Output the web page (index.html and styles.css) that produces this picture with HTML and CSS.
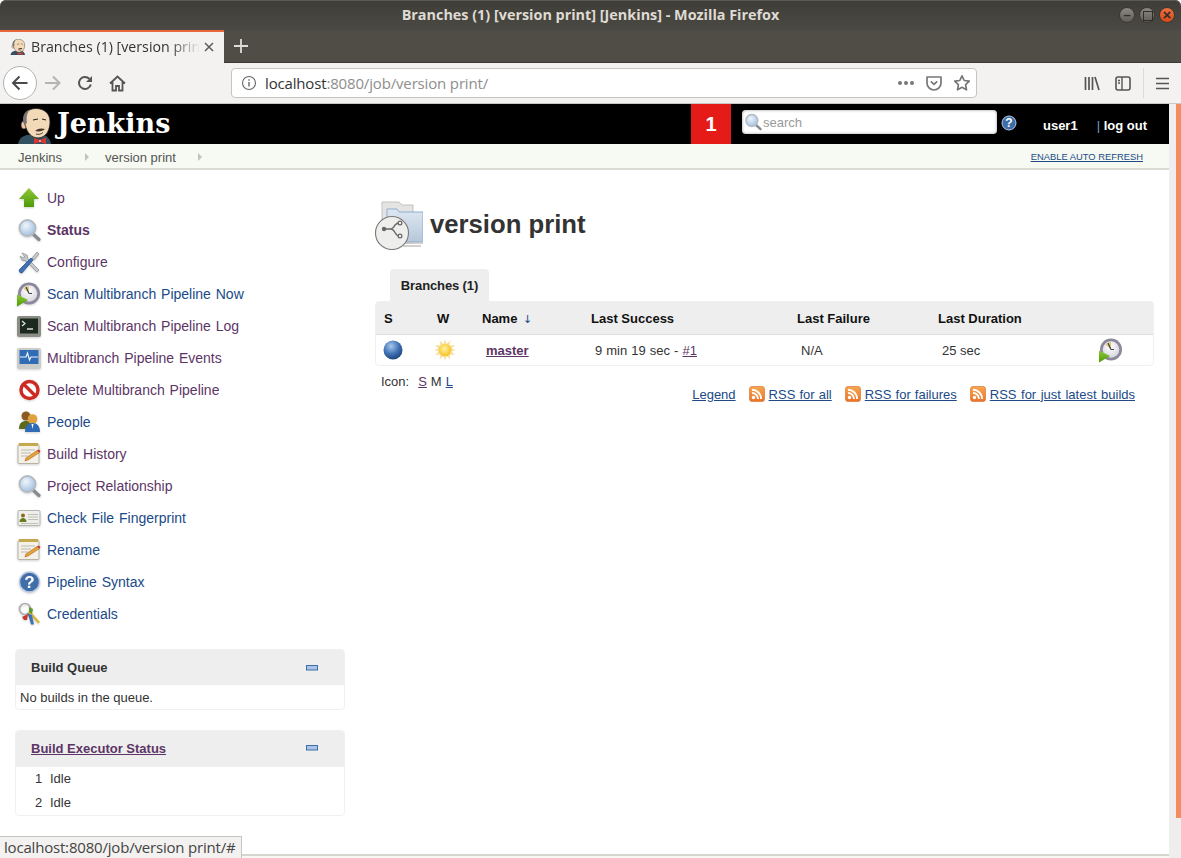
FILE: index.html
```html
<!DOCTYPE html>
<html lang="en">
<head>
<meta charset="utf-8">
<title>Branches (1) [version print] [Jenkins]</title>
<link rel="stylesheet" href="styles.css">
</head>
<body>
<svg class="defs" width="0" height="0" aria-hidden="true">
  <defs>
    <radialGradient id="glass" cx="40%" cy="35%" r="70%"><stop offset="0" stop-color="#eef5fb"/><stop offset="1" stop-color="#9fbfe0"/></radialGradient>
    <radialGradient id="ball" cx="40%" cy="30%" r="75%"><stop offset="0" stop-color="#a9c8ea"/><stop offset=".55" stop-color="#3f72b5"/><stop offset="1" stop-color="#1d3f73"/></radialGradient>
    <radialGradient id="sunc" cx="45%" cy="40%" r="60%"><stop offset="0" stop-color="#fff3a0"/><stop offset="1" stop-color="#f6c123"/></radialGradient>
    <radialGradient id="face" cx="45%" cy="35%" r="70%"><stop offset="0" stop-color="#ffffff"/><stop offset="1" stop-color="#d5d3dc"/></radialGradient>
    <linearGradient id="rss" x1="0" y1="0" x2="0" y2="1"><stop offset="0" stop-color="#f8a650"/><stop offset="1" stop-color="#e8742a"/></linearGradient>
    <linearGradient id="arrow" x1="0" y1="0" x2="0" y2="1"><stop offset="0" stop-color="#8fc93a"/><stop offset="1" stop-color="#4e9a06"/></linearGradient>
    <linearGradient id="folder" x1="0" y1="0" x2="0" y2="1"><stop offset="0" stop-color="#dfe8f2"/><stop offset="1" stop-color="#b6c7da"/></linearGradient>
    <symbol id="i-search" viewBox="0 0 24 24">
      <path d="M15 15l7 6.500" stroke="#858a8f" stroke-width="3.200" stroke-linecap="round"/>
      <circle cx="10.500" cy="10" r="8" fill="url(#glass)" stroke="#b4bac1" stroke-width="1.800"/>
    </symbol>
    <symbol id="i-clock" viewBox="0 0 24 26">
      <circle cx="12" cy="12.500" r="11" fill="#8b889b"/>
      <circle cx="12" cy="12.500" r="8.300" fill="url(#face)"/>
      <path d="M12 12.500V5a7.500 7.500 0 0 0-5.500 2.500z" fill="#e2c77c"/>
      <path d="M12 12.500L9 6M12 12.500h3" stroke="#444" stroke-width="1.200" fill="none"/>
      <path d="M0 13.500l11 5.500L0 25.500z" fill="url(#arrow)"/>
    </symbol>
    <symbol id="i-note" viewBox="0 0 24 24">
      <rect x="1" y="2.500" width="21" height="19" rx="1" fill="#f3f1e8" stroke="#b5b3a6"/>
      <rect x="2" y="1" width="19" height="3" fill="#c4a94f"/>
      <path d="M4 8h14M4 11h10M4 14h7" stroke="#bdbcb4" stroke-width="1.200"/>
      <path d="M8 19l1-3L20 8.500l2.500 2L11 18z" fill="#e8a23c" stroke="#a8651a" stroke-width=".6"/>
      <path d="M20 8.500l2.500 2 1-1.500-2-1.500z" fill="#c8372d"/>
    </symbol>
    <symbol id="i-rss" viewBox="0 0 16 16">
      <rect x=".5" y=".5" width="15" height="15" rx="2.500" fill="url(#rss)" stroke="#d9691f" stroke-width=".6"/>
      <circle cx="4.500" cy="11.500" r="1.700" fill="#fff"/>
      <path d="M3 7a6 6 0 0 1 6 6M3 3.800A9.200 9.200 0 0 1 12.200 13" fill="none" stroke="#fff" stroke-width="1.900"/>
    </symbol>
    <symbol id="i-butler" viewBox="0 0 34 36">
      <path d="M0 36c1-5 4-8 9-9l14-1c5 1 9 4 10 10z" fill="#335061"/>
      <ellipse cx="6" cy="17" rx="3" ry="4" fill="#ecc9a4" stroke="#231f20" stroke-width=".6"/>
      <path d="M6 14C4 6 10 .5 18 .5c8 0 14 5 14 13 0 8-3 14-9 16-7 2-13-3-15-10z" fill="#f2d9b8" stroke="#231f20" stroke-width=".8"/>
      <path d="M6.500 17C3 10 6 3 12 1.500 8 6 8.500 11 9 15z" fill="#77757a"/>
      <path d="M15 12l5-1M24 11l4 1" stroke="#231f20" stroke-width="1"/>
      <path d="M17 23c3-3 7-3 10-2-2 2-6 3-10 2z" fill="#49352a"/>
      <path d="M18 26c3 1 5 0 7-1.500" stroke="#231f20" fill="none" stroke-width=".8"/>
      <path d="M16 30l6 2 6-2.500v6.500l-6-2-6 2z" fill="#d33833"/>
      <path d="M22 32v2" stroke="#fff"/>
    </symbol>
    <symbol id="i-minus" viewBox="0 0 12 6">
      <rect x=".5" y=".5" width="11" height="4.500" fill="#a9c4e4" stroke="#3d6ea8"/>
    </symbol>
  </defs>
</svg>

<div class="titlebar">
  <span class="title-text">Branches (1) [version print] [Jenkins] - Mozilla Firefox</span>
  <div class="winbtns">
    <span class="winbtn">–</span><span class="winbtn winbtn-sq"></span><span class="winbtn winbtn-close">×</span>
  </div>
</div>

<div class="tabbar">
  <div class="ff-tab">
    <svg class="fav" width="16" height="16"><use href="#i-butler"/></svg>
    <span class="ff-tab-title">Branches (1) [version print] [Jenkins]</span>
    <svg class="ff-x" width="12" height="12" viewBox="0 0 12 12"><path d="M2 2l8 8M10 2l-8 8" stroke="#5a5a5a" stroke-width="1.500"/></svg>
  </div>
  <svg class="ff-new" width="16" height="16" viewBox="0 0 16 16"><path d="M8 1v14M1 8h14" stroke="#dedcd8" stroke-width="1.800"/></svg>
</div>

<div class="navbar">
  <span class="backbtn"><svg width="18" height="16" viewBox="0 0 18 16"><path d="M16.500 8H2M8.500 1.500L2 8l6.500 6.500" fill="none" stroke="#4a4a4a" stroke-width="2"/></svg></span>
  <svg class="nav-fwd" width="18" height="16" viewBox="0 0 18 16"><path d="M1 8h14.500M9 1.500L15.500 8 9 14.500" fill="none" stroke="#b4b4b2" stroke-width="2"/></svg>
  <svg class="nav-reload" width="16" height="16" viewBox="0 0 16 16"><path d="M13.800 9.500A6 6 0 1 1 12.300 3.800" fill="none" stroke="#555" stroke-width="2"/><path d="M15 1v6H9z" fill="#555"/></svg>
  <svg class="nav-home" width="17" height="17" viewBox="0 0 17 17"><path d="M1 8.500L8.500 1.500 16 8.500M3.500 7v8.500h3.500v-4.500h3v4.500h3.500V7" fill="none" stroke="#555" stroke-width="1.800"/></svg>
  <div class="urlbar">
    <svg class="url-info" width="16" height="16" viewBox="0 0 16 16"><circle cx="8" cy="8" r="6.500" fill="none" stroke="#666" stroke-width="1.100"/><path d="M8 7v4.500M8 4.300v1.400" stroke="#666" stroke-width="1.400"/></svg>
    <span class="url-text"><span class="url-host">localhost</span>:8080/job/version print/</span>
    <span class="url-dots">
      <i></i><i></i><i></i>
    </span>
    <svg class="url-pocket" width="16" height="16" viewBox="0 0 16 16"><path d="M1 2h14v6a7 7 0 0 1-14 0z" fill="none" stroke="#777" stroke-width="1.700" stroke-linejoin="round"/><path d="M4.800 6.300L8 9.300l3.200-3" fill="none" stroke="#777" stroke-width="1.700"/></svg>
    <svg class="url-star" width="18" height="18" viewBox="0 0 18 18"><path d="M9 1.800l2.200 4.700 5.100.7-3.700 3.500.9 5.100L9 13.300l-4.500 2.500.9-5.100L1.700 7.200l5.100-.7z" fill="none" stroke="#777" stroke-width="1.700" stroke-linejoin="round"/></svg>
  </div>
  <svg class="nav-lib" width="16" height="15" viewBox="0 0 16 15"><path d="M1.500 1v13M5 1v13M8.500 1v13M11 1l4 13" stroke="#555" stroke-width="1.700" fill="none"/></svg>
  <svg class="nav-side" width="16" height="15" viewBox="0 0 16 15"><rect x="1" y="1" width="14" height="13" rx="2" fill="none" stroke="#555" stroke-width="1.600"/><path d="M7 1v13M3 4.500h2M3 7h2" stroke="#555" stroke-width="1.400"/></svg>
  <span class="nav-sep"></span>
  <svg class="nav-menu" width="13" height="13" viewBox="0 0 13 13"><path d="M0 1.500h13M0 6.500h13M0 11.500h13" stroke="#555" stroke-width="1.600"/></svg>
</div>

<div class="viewport">
  <div class="page">
    <header class="jk-header">
      <svg class="jk-butler" width="34" height="36"><use href="#i-butler"/></svg>
      <span class="jk-logo">Jenkins</span>
      <span class="jk-spacer"></span>
      <span class="jk-alert">1</span>
      <div class="jk-search">
        <svg width="18" height="18"><use href="#i-search"/></svg>
        <span class="jk-search-ph">search</span>
      </div>
      <svg class="jk-help" width="16" height="16" viewBox="0 0 16 16"><circle cx="8" cy="8" r="7" fill="#3d6ea8" stroke="#b7cbe4"/><text x="8" y="12" text-anchor="middle" class="jk-help-q">?</text></svg>
      <span class="jk-user">user1</span>
      <span class="jk-logout"><span class="jk-pipe">|</span> log out</span>
    </header>

    <nav class="crumbs">
      <span>Jenkins</span><i class="crumb-arrow"></i>
      <span>version print</span><i class="crumb-arrow crumb-arrow-end"></i>
      <a class="autorefresh" href="#">ENABLE AUTO REFRESH</a>
    </nav>

    <div class="main">
      <aside class="side">
        <ul class="tasks">
          <li><svg width="24" height="24" viewBox="0 0 24 24"><path d="M12 2l10 11h-5v8H7v-8H2z" fill="url(#arrow)"/></svg><a class="v" href="#">Up</a></li>
          <li><svg width="24" height="24"><use href="#i-search"/></svg><a class="v b" href="#">Status</a></li>
          <li><svg width="24" height="24" viewBox="0 0 24 24"><path d="M5 3l5 2 1 4 11 11-2 2L9 11 5 10 3 6l3 2 2-1z" fill="#c6c9cc" stroke="#8a8e92" stroke-width=".7"/><path d="M2 20L14 8l2 2L5 23l-2-.5z" fill="#3f72b5" stroke="#204a87" stroke-width=".7"/><path d="M15 8l5-6 2 2-5 6z" fill="#c6c9cc" stroke="#8a8e92" stroke-width=".7"/></svg><a class="v" href="#">Configure</a></li>
          <li><svg width="24" height="26"><use href="#i-clock"/></svg><a href="#">Scan Multibranch Pipeline Now</a></li>
          <li><svg width="24" height="24" viewBox="0 0 24 24"><rect x="0" y="2" width="24" height="21" rx="2" fill="#8b8d85"/><rect x="3" y="4.500" width="18" height="15" fill="#1b2a1c"/><path d="M5 7l3 2.500L5 12" stroke="#e6eee0" fill="none" stroke-width="1.200"/><path d="M10 15h6" stroke="#e6eee0" stroke-width="1.400"/></svg><a class="v" href="#">Scan Multibranch Pipeline Log</a></li>
          <li><svg width="24" height="24" viewBox="0 0 24 24"><rect x="0" y="2" width="24" height="21" rx="2" fill="#c9ccc8"/><rect x="2.500" y="4" width="19" height="14" fill="#2f6cb5"/><path d="M3 11h6l1.500-4 2 7 1.500-3h7" stroke="#e8f2fb" fill="none" stroke-width="1.200"/></svg><a class="v" href="#">Multibranch Pipeline Events</a></li>
          <li><svg width="24" height="24" viewBox="0 0 24 24"><circle cx="12.500" cy="12" r="8.500" fill="#fff" stroke="#cc2a22" stroke-width="3.400"/><path d="M6.500 6l12 12" stroke="#cc2a22" stroke-width="3.400"/></svg><a class="v" href="#">Delete Multibranch Pipeline</a></li>
          <li><svg width="24" height="24" viewBox="0 0 24 24"><circle cx="9" cy="6" r="4.500" fill="#8a5a1e"/><path d="M2 19c0-6 3-8 7-8s6 2 6 8z" fill="#5d6a1e"/><circle cx="15.500" cy="9" r="4.800" fill="#e0a03c"/><path d="M8 22c0-6 3-9 7.500-9S23 16 23 22z" fill="#2f6cb5"/><path d="M14.500 14h2l-1 5z" fill="#fff"/></svg><a href="#">People</a></li>
          <li><svg width="24" height="24"><use href="#i-note"/></svg><a class="v" href="#">Build History</a></li>
          <li><svg width="24" height="24"><use href="#i-search"/></svg><a class="v" href="#">Project Relationship</a></li>
          <li><svg width="24" height="24" viewBox="0 0 24 24"><rect x="1" y="4.500" width="22" height="15" rx="1" fill="#eeeeea" stroke="#b6b6ae"/><circle cx="6" cy="9.500" r="2" fill="#8a6a1e"/><path d="M2.500 16c0-3 2-4 3.500-4s3.500 1 3.500 4z" fill="#6a7a1e"/><path d="M11 8.500h10M11 11h10M11 13.500h10M4 17.500h17" stroke="#c0c0b8"/></svg><a href="#">Check File Fingerprint</a></li>
          <li><svg width="24" height="24"><use href="#i-note"/></svg><a href="#">Rename</a></li>
          <li><svg width="24" height="24" viewBox="0 0 24 24"><circle cx="12.500" cy="12" r="10" fill="#3f6ea8" stroke="#b9cbe2" stroke-width="1.400"/><text x="12.500" y="18" text-anchor="middle" class="help-q">?</text></svg><a href="#">Pipeline Syntax</a></li>
          <li><svg width="24" height="24" viewBox="0 0 24 24"><circle cx="8" cy="7" r="5.500" fill="none" stroke="#b0b0b0" stroke-width="1.700"/><path d="M13 9l10 11-2 1.500-10-11z" fill="#d9b53a"/><path d="M10 11l5 2 2 9.500h-3l-2-7z" fill="#3f72b5"/><path d="M5 15l6-3-1 6H7z" fill="#c8372d"/><path d="M12 5l4 2-1 5-3-2z" fill="#5c9a2a"/></svg><a href="#">Credentials</a></li>
        </ul>

        <section class="pane pane-q">
          <div class="pane-head"><span class="pane-title">Build Queue</span><svg width="12" height="6"><use href="#i-minus"/></svg></div>
          <div class="pane-body">No builds in the queue.</div>
        </section>

        <section class="pane pane-e">
          <div class="pane-head pane-head-e"><a class="pane-title v" href="#">Build Executor Status</a><svg width="12" height="6"><use href="#i-minus"/></svg></div>
          <div class="exec"><span class="exec-n">1</span><span>Idle</span></div>
          <div class="exec"><span class="exec-n">2</span><span>Idle</span></div>
        </section>
      </aside>

      <main class="content">
        <div class="heading">
          <svg class="heading-ico" width="48" height="50" viewBox="0 0 48 50">
            <path d="M7 2h17l3 3h11v38H7z" fill="#e4e4e2" stroke="#c2c2c0"/>
            <path d="M12 9h10l2 3h24v28a2 2 0 0 1-2 2H20l-8-8z" fill="url(#folder)" stroke="#8fadd0"/>
            <path d="M26 43h22M28 46h18" stroke="#c2c2c0" stroke-width="1.500"/>
            <circle cx="17" cy="33" r="16.500" fill="#eeeeec" stroke="#7a7a78" stroke-width="1.100"/>
            <path d="M9 29h7c4 0 4 7 8 7M15 29c3 0 4-2 5-4 1-1 2-2 4-2" fill="none" stroke="#666" stroke-width="1.400"/>
            <circle cx="9" cy="29" r="2.200" fill="#666"/><circle cx="25" cy="23" r="1.900" fill="none" stroke="#666" stroke-width="1.200"/><circle cx="25" cy="36" r="1.900" fill="none" stroke="#666" stroke-width="1.200"/>
          </svg>
          <h1 class="h-title">version print</h1>
        </div>

        <div class="tabs"><span class="tab">Branches (1)</span></div>

        <table class="grid">
          <colgroup><col class="c1"><col class="c2"><col class="c3"><col class="c4"><col class="c5"><col class="c6"><col class="c7"></colgroup>
          <thead>
            <tr><th class="th-s">S</th><th>W</th><th>Name <span class="sort">↓</span></th><th>Last Success</th><th>Last Failure</th><th>Last Duration</th><th></th></tr>
          </thead>
          <tbody>
            <tr>
              <td class="ico"><svg width="20" height="20" viewBox="0 0 20 20"><circle cx="10" cy="10" r="9.500" fill="url(#ball)"/></svg></td>
              <td class="ico"><svg class="sun" width="22" height="22" viewBox="0 0 22 22"><path d="M11 0l1.500 5 4-3.500-1 5 5.500-.5-3.500 3.500L22 11l-4.500 1.500 3.500 3.500-5.500-.5 1 5-4-3.500L11 22l-1.500-5-4 3.500 1-5-5.500.5 3.500-3.500L0 11l4.500-1.500L1 6l5.500.5-1-5 4 3.500z" fill="#f9dfa0"/><circle cx="11" cy="11" r="6.300" fill="url(#sunc)"/></svg></td>
              <td><a class="v master" href="#">master</a></td>
              <td class="ago">9 min 19 sec - <a class="v" href="#">#1</a></td>
              <td>N/A</td>
              <td>25 sec</td>
              <td class="ico ico-last"><svg width="24" height="26"><use href="#i-clock"/></svg></td>
            </tr>
          </tbody>
        </table>

        <div class="below">
          <div class="iconsize"><span class="icon-label">Icon:</span><a class="v" href="#">S</a><span>M</span><a href="#">L</a></div>
          <div class="legend">
            <a href="#">Legend</a>
            <span class="rss rss-tight"><svg width="16" height="16"><use href="#i-rss"/></svg><a href="#">RSS for all</a></span>
            <span class="rss rss-tight"><svg width="16" height="16"><use href="#i-rss"/></svg><a href="#">RSS for failures</a></span>
            <span class="rss"><svg width="16" height="16"><use href="#i-rss"/></svg><a href="#">RSS for just latest builds</a></span>
          </div>
        </div>
      </main>
    </div>
    <footer class="foot"></footer>
  </div>
  <div class="scroll"><span class="thumb"></span></div>
  <div class="status">localhost:8080/job/version print/#</div>
</div>
</body>
</html>
```
FILE: styles.css
```css
* { box-sizing: border-box; }
html, body { margin: 0; padding: 0; height: 100%; overflow: hidden; }
body {
  display: flex; flex-direction: column; height: 858px;
  font-family: "Liberation Sans", Arial, sans-serif; font-size: 13px; color: #333; background: #fff;
}
.defs { position: absolute; }
svg { display: block; flex: none; }
a { color: #204a87; text-decoration: underline; }
a.v { color: #5c3566; }

/* window title */
.titlebar {
  height: 30px; flex: none; display: flex; align-items: center; justify-content: center; position: relative;
  background: linear-gradient(#3f3d38, #4b4943); border-radius: 6px 6px 0 0;
  box-shadow: inset 0 1px 0 #5c5a54; padding-bottom: 2px;
}
.title-text { font-family: "Open Sans", sans-serif; font-weight: 700; font-size: 14.400px; color: #dfdbd2; }
.winbtns { position: absolute; right: 6px; top: 7px; display: flex; gap: 4px; }
.winbtn {
  width: 16px; height: 16px; border-radius: 50%; background: linear-gradient(#8a8880, #5f5d56); border: 1px solid #3a3833;
  color: #2f2e2a; font-size: 13px; line-height: 13px; text-align: center; font-weight: 700;
}
.winbtn-sq { position: relative; }
.winbtn-sq::after { content: ""; position: absolute; left: 3px; top: 3px; width: 8px; height: 8px; border: 1px solid #2f2e2a; }
.winbtn-close { background: linear-gradient(#f0703f, #d8491a); font-size: 15px; }

/* tab strip */
.tabbar { height: 33px; flex: none; display: flex; align-items: stretch; background: #504d46; border-bottom: 1px solid #3b3934; }
.ff-tab {
  width: 224px; background: #f3f2f0; border-top: 2px solid #e9673a; display: flex; align-items: center;
  padding: 0 9px 2px 10px; margin-bottom: -1px;
}
.fav { margin-right: 5px; }
.ff-tab-title {
  flex: 1; overflow: hidden; white-space: nowrap; font-family: "Open Sans", sans-serif; font-size: 14.200px; color: #333;
  -webkit-mask-image: linear-gradient(to right, #000 82%, transparent);
  mask-image: linear-gradient(to right, #000 82%, transparent);
}
.ff-x { margin-left: 3px; }
.ff-new { margin: 8px 0 0 9px; }

/* nav bar */
.navbar { height: 41px; flex: none; display: flex; align-items: center; background: #f3f2f0; border-bottom: 1px solid #c8c7c5; padding-left: 3px; }
.backbtn {
  width: 34px; height: 34px; border-radius: 50%; border: 1px solid #b3b3b1; background: #fff;
  display: flex; align-items: center; justify-content: center;
}
.nav-fwd { margin-left: 7px; }
.nav-reload { margin-left: 15px; }
.nav-home { margin-left: 16px; }
.urlbar {
  width: 746px; height: 30px; margin-left: 105px; background: #fff; border: 1px solid #c4c4c2; border-radius: 4px;
  display: flex; align-items: center; padding: 0 5px 0 9px;
}
.url-text { flex: 1; margin-left: 8px; font-family: "Open Sans", sans-serif; font-size: 15px; color: #8e8e8c; letter-spacing: -.16px; white-space: nowrap; }
.url-host { color: #333; }
.url-dots { display: flex; gap: 2px; margin-right: 12px; }
.url-dots i { width: 4px; height: 4px; border-radius: 50%; background: #777; }
.url-pocket { margin-right: 11px; }
.nav-lib { margin-left: 107px; }
.nav-side { margin-left: 15px; }
.nav-sep { width: 1px; height: 30px; background: #dcdbd9; margin-left: 12px; }
.nav-menu { margin-left: 12px; }

/* viewport */
.viewport { flex: 1; display: flex; min-height: 0; position: relative; }
.page { flex: 1; min-width: 0; display: flex; flex-direction: column; }
.scroll { width: 12px; flex: none; background: #f0eeed; display: flex; justify-content: flex-end; }
.thumb { width: 5px; height: 714px; background: #f48c63; }
.status {
  position: absolute; left: 0; bottom: 0; width: 242px; height: 22px; background: #f3f2f0;
  border: 1px solid #c6c6c4; border-width: 1px 1px 0 0; padding: 0 0 0 4px;
  font-family: "Open Sans", sans-serif; font-size: 15px; color: #444; letter-spacing: -.19px; white-space: nowrap; overflow: hidden;
}

/* Jenkins header */
.jk-header { height: 40px; flex: none; background: #000; display: flex; align-items: center; padding-right: 22px; overflow: hidden; }
.jk-butler { margin: 4px 0 0 18px; }
.jk-logo { margin: -2px 0 0 5px; font-family: "DejaVu Serif", serif; font-weight: 700; font-size: 27px; color: #fff; }
.jk-spacer { flex: 1; }
.jk-alert { width: 40px; height: 40px; background: #e41b17; color: #fff; font-weight: 700; font-size: 20px; line-height: 40px; text-align: center; }
.jk-search {
  width: 255px; height: 24px; margin: 0 0 4px 11px; background: #fff; border-radius: 4px; display: flex; align-items: center; padding-left: 2px;
  box-shadow: inset 0 0 3px #999;
}
.jk-search-ph { margin-left: 1px; font-size: 13px; color: #999; }
.jk-help { margin: 0 0 2px 4px; }
.jk-help-q { font: 700 12px "Liberation Sans", sans-serif; fill: #fff; }
.jk-user { margin: 2px 0 0 26px; color: #fff; font-weight: 700; font-size: 13px; }
.jk-logout { margin: 2px 0 0 19px; color: #fff; font-weight: 700; font-size: 13px; }
.jk-pipe { color: #729fcf; font-weight: 400; }

/* breadcrumb */
.crumbs {
  height: 26px; flex: none; background: #f6faf2; border-bottom: 2px solid #d9dcd5; display: flex; align-items: center;
  padding: 2px 26px 0 18px; color: #555; font-size: 13px;
}
.crumb-arrow { width: 0; height: 0; border-left: 4px solid #c0c4bb; border-top: 4px solid transparent; border-bottom: 4px solid transparent; margin: 0 16px 0 23px; }
.crumb-arrow-end { margin-left: 22px; }
.autorefresh { margin: -2px 0 0 auto; font-size: 9.400px; }

/* main */
.main { flex: 1; min-height: 0; display: flex; }
.side { width: 360px; flex: none; padding: 12px 0 0 15px; display: flex; flex-direction: column; }
.tasks { list-style: none; margin: 0 0 19px; padding: 0; }
.tasks li { height: 32px; display: flex; align-items: center; gap: 6px; padding-left: 2px; font-size: 14px; word-spacing: 1px; }
.tasks svg { filter: drop-shadow(0 1px 1px rgba(0,0,0,.18)); }
.tasks a { text-decoration: none; }
.tasks a.b { font-weight: 700; }
.help-q { font: 700 17px "Liberation Sans", sans-serif; fill: #fff; }

.pane { width: 330px; border: 1px solid #f0f0f0; border-radius: 4px; overflow: hidden; }
.pane-q { height: 61px; margin-bottom: 20px; }
.pane-e { height: 86px; }
.pane-head { height: 35px; background: #eee; display: flex; align-items: center; justify-content: space-between; padding: 0 26px 0 15px; }
.pane-head-e { height: 36px; padding-bottom: 2px; margin-bottom: -1px; }
.pane-title { font-weight: 700; font-size: 13px; color: #333; }
a.pane-title { color: #5c3566; }
.pane-body { padding: 5px 4px; font-size: 13px; }
.exec { height: 24px; display: flex; align-items: center; font-size: 13px; padding-left: 19px; }
.exec-n { width: 15px; }

/* content */
.content { flex: 1; min-width: 0; padding: 30px 15px 0 15px; }
.heading { display: flex; align-items: center; gap: 7px; height: 50px; }
.h-title { margin: 0 0 2px; font-size: 25.700px; font-weight: 700; color: #333; }
.tabs { margin-top: 19px; padding-left: 15px; height: 32px; display: flex; }
.tab { background: #eee; border-radius: 4px 4px 0 0; width: 99px; display: flex; align-items: center; justify-content: center; font-weight: 700; font-size: 13px; letter-spacing: -.12px; color: #222; }
.grid { width: 779px; table-layout: fixed; border-collapse: separate; border-spacing: 0; border: 1px solid #f0f0f0; border-radius: 4px; }
.c1 { width: 52px; } .c2 { width: 45px; } .c3 { width: 109px; } .c4 { width: 206px; } .c5 { width: 141px; } .c6 { width: 161px; }
.grid th { height: 33px; background: #eee; border-bottom: 1px solid #ddd; padding: 0 9px; text-align: left; font-size: 13px; color: #111; }
.grid th.th-s { padding-left: 8px; }
.sort { font: 400 11px "DejaVu Sans", sans-serif; color: #204a87; margin-left: 2px; }
.grid td { height: 30px; padding: 0 13px; font-size: 13px; }
.grid td.ico { padding: 0 7px; }
.grid td.ico-last { padding-left: 9px; }
.sun { margin-left: -1px; }
.grid td.ago { word-spacing: .45px; }
.master { font-weight: 700; }
.below { display: flex; justify-content: space-between; align-items: flex-start; padding: 8px 19px 0 6px; }
.iconsize { display: flex; gap: 4px; font-size: 13px; }
.icon-label { margin-right: 5px; }
.legend { display: flex; gap: 13px; margin-top: 12px; align-items: center; }
.rss { display: flex; align-items: center; gap: 4px; word-spacing: .9px; }
.rss-tight { word-spacing: .5px; }
.foot { height: 4px; flex: none; background: #f6faf2; border-top: 2px solid #d3d7cf; }
```
